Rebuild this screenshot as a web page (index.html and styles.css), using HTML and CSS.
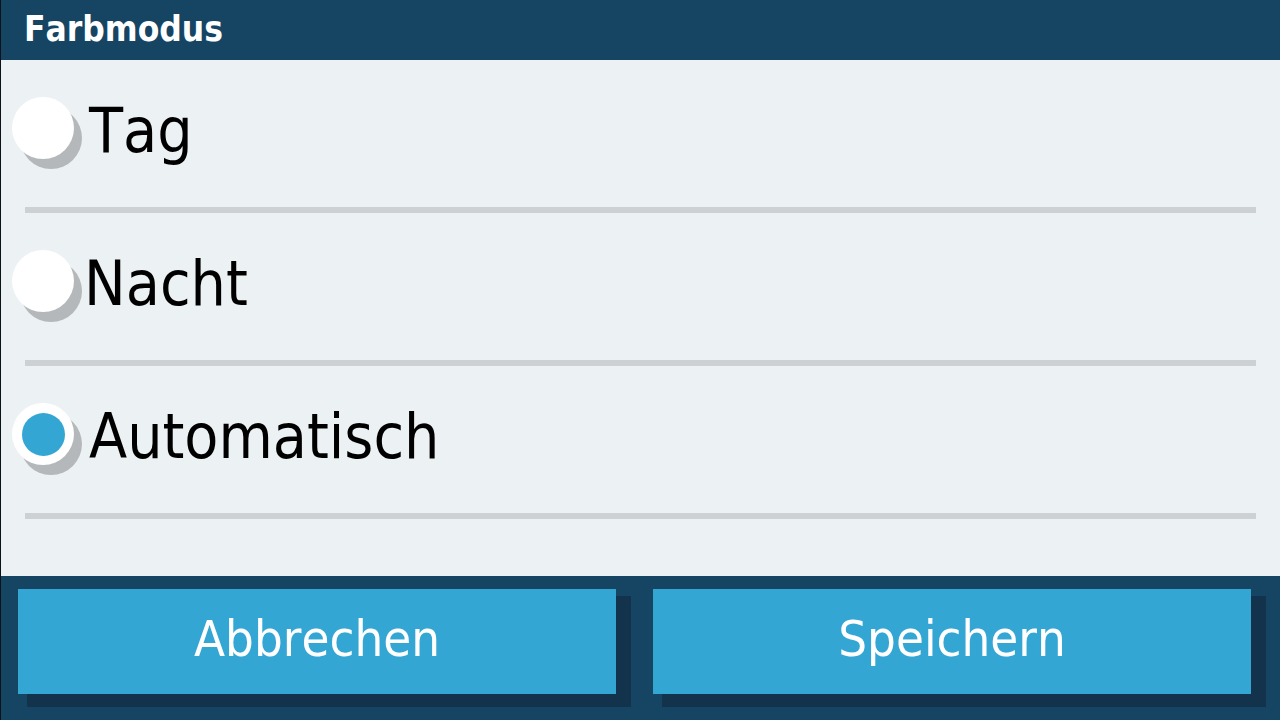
FILE: index.html
```html
<!DOCTYPE html>
<html lang="de">
<head>
<meta charset="utf-8">
<title>Farbmodus</title>
<link rel="stylesheet" href="styles.css">
</head>
<body>
<div class="app">
  <header class="header">Farbmodus</header>
  <main class="list">
    <div class="option">
      <span class="radio"></span>
      <span class="label label-tag">Tag</span>
    </div>
    <div class="divider"></div>
    <div class="option">
      <span class="radio"></span>
      <span class="label label-nacht">Nacht</span>
    </div>
    <div class="divider"></div>
    <div class="option">
      <span class="radio radio-checked"><span class="dot"></span></span>
      <span class="label label-auto">Automatisch</span>
    </div>
    <div class="divider"></div>
  </main>
  <footer class="footer">
    <button class="btn">Abbrechen</button>
    <button class="btn">Speichern</button>
  </footer>
</div>
</body>
</html>
```
FILE: styles.css
```css
* { box-sizing: border-box; }
html, body { margin: 0; padding: 0; }
body {
  width: 1280px;
  height: 720px;
  overflow: hidden;
  font-family: "DejaVu Sans Condensed", "DejaVu Sans", sans-serif;
  font-stretch: condensed;
  font-kerning: none;
}
.app {
  width: 1280px;
  height: 720px;
  display: flex;
  flex-direction: column;
  border-left: 1px solid #0b1318;
}
.header {
  height: 60px;
  flex: 0 0 60px;
  background: #164564;
  color: #ffffff;
  font-weight: bold;
  font-size: 35px;
  display: flex;
  align-items: center;
  padding-left: 23px;
  padding-bottom: 2px;
}
.list {
  flex: 1 1 auto;
  background: #ecf1f4;
  display: flex;
  flex-direction: column;
}
.option {
  height: 136px;
  display: flex;
  align-items: center;
  padding-left: 11px;
}
.radio {
  width: 62px;
  height: 62px;
  flex: 0 0 62px;
  border-radius: 50%;
  background: #ffffff;
  box-shadow: 8px 10px 0 #b5b8ba;
  display: flex;
  align-items: center;
  justify-content: center;
}
.dot {
  width: 43px;
  height: 43px;
  border-radius: 50%;
  background: #34a6d4;
}
.label {
  font-size: 62px;
  color: #000000;
  line-height: 70px;
  padding-top: 5px;
}
.label-tag { margin-left: 15px; }
.label-nacht { margin-left: 10px; }
.label-auto { margin-left: 15px; }
.divider {
  height: 6px;
  margin: 11px 24px 0 24px;
  background: #cdd1d4;
}
.footer {
  height: 144px;
  flex: 0 0 144px;
  background: #164564;
  display: grid;
  grid-template-columns: 598px 598px;
  column-gap: 37px;
  align-items: start;
  padding: 13px 0 0 17px;
}
.btn {
  height: 105px;
  border: 0;
  margin: 0;
  padding: 0 0 6px 0;
  background: #34a6d4;
  color: #ffffff;
  font-family: inherit;
  font-stretch: condensed;
  font-kerning: none;
  font-size: 50.5px;
  box-shadow: 12px 10px 0 3px #12334b;
}
```
